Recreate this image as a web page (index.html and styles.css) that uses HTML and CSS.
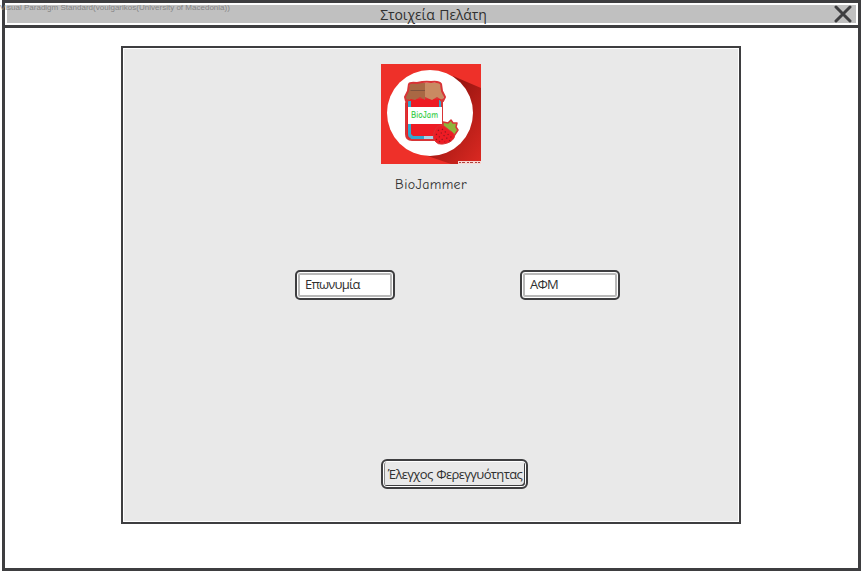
FILE: index.html
```html
<!DOCTYPE html>
<html lang="el">
<head>
<meta charset="utf-8">
<title>Στοιχεία Πελάτη</title>
<link rel="stylesheet" href="styles.css">
</head>
<body>
<div class="watermark">Visual Paradigm Standard(voulgarikos(University of Macedonia))</div>
<main class="window">
  <header class="titlebar">
    <h1 class="title"><span>Στοιχεία Πελάτη</span></h1>
    <svg class="close" viewBox="0 0 18 18"><path d="M2 2 16 16M16 2 2 16"/></svg>
  </header>
  <section class="panel">
    <svg class="logo" viewBox="0 0 100 100">
      <defs>
        <linearGradient id="shade" x1="0" y1="0" x2="1" y2="1">
          <stop offset=".35" stop-color="#981510"/>
          <stop offset="1" stop-color="#dc2922"/>
        </linearGradient>
      </defs>
      <path fill="#ee3029" d="M0 0h100v100H0z"/>
      <path fill="url(#shade)" d="M72 12 100 24V100H70L38 89z"/>
      <circle cx="49" cy="49" r="43" fill="#fff"/>
      <path fill="#ed1c24" stroke="#d83436" stroke-width="2" d="M29 34h32v37q0 5-5 5H31q-6 0-6-6V39z"/>
      <path fill="#32a8cf" d="M27 37h3v33l4 4h-4q-3 0-3-4zM58 36h2v10h-2zM28 72h27v3H30z"/>
      <path fill="#a9d4e7" d="M43 72h9v3h-9z"/>
      <path fill="#a96844" d="M29 19h15v17l-5-3-5 3-4-1-4 2-2-3 3-7z"/>
      <path fill="#c98a62" d="M44 19h15l2 7 2 7-2 3-5-3-5 3-7-3z"/>
      <path fill="#80523d" d="M30 26h14v1H29z"/>
      <path fill="none" stroke="#d83436" stroke-width="2" stroke-linejoin="round" d="M28 20q1-2 8-1 8-2 14-1 8-1 10 2l1 7 3 6-2 4-3-1M28 20l-1 7-3 6 1 4 3-1"/>
      <path fill="#fff" d="M27 43h34v17H27z"/>
      <text class="jar-label" x="30" y="54" textLength="27" lengthAdjust="spacingAndGlyphs">BioJam</text>
      <path fill="#8eb43a" stroke="#d83436" stroke-width="1.5" stroke-linejoin="round" d="m62 58 5 1 3-3 2 3 4 0-1 4 2 3-2 3-2 3-5-4-6-5z"/>
      <path fill="#ed1c24" stroke="#d83436" d="M54 66q3-6 9-4l5 4q7 4 5 8-3 5-11 6-5 1-8-3-3-4 0-11z"/>
      <path fill="none" stroke="#8b1821" stroke-width="1.2" stroke-dasharray="1.2 2.6" d="M57 66 69 77M55 70l9 8M61 65l10 9M55 75l4 3"/>
      <path fill="#f7d8d5" d="M77 97h23v3H77z"/>
      <path fill="none" stroke="#ad423d" stroke-dasharray="2 1 3 2" d="M78 98.5h21"/>
    </svg>
    <p class="brand"><span>BioJammer</span></p>
    <div class="fields">
      <div class="field"><span class="name">Επωνυμία</span></div>
      <div class="field"><span class="tax">ΑΦΜ</span></div>
    </div>
    <button class="check" type="button"><span>Έλεγχος Φερεγγυότητας</span></button>
  </section>
</main>
</body>
</html>
```

FILE: styles.css
```css
* {
  box-sizing: border-box;
}

body {
  margin: 0;
  height: 575px;
  overflow: hidden;
  background: #fff;
  color: #303030;
  font-family: "Comic Sans MS", "Comic Neue", "Open Sans", sans-serif;
  font-size: 13px;
}

.watermark {
  position: absolute;
  z-index: 1;
  left: 0;
  top: 2px;
  color: #858585;
  font: 8px/11px "Liberation Sans", sans-serif;
  letter-spacing: 0.01px;
  white-space: nowrap;
}

.window {
  width: 859px;
  height: 571px;
  margin-left: 2px;
  border: 3px solid #3e3e40;
}

.titlebar {
  display: flex;
  height: 25px;
  padding: 2px 6px 0 24px;
  border-bottom: 3px solid #3e3e40;
  background: #c0c0c0;
  box-shadow: inset 0 0 0 2px #fff;
}

.title {
  flex: 1;
  margin: 0;
  padding-left: 4px;
  font-size: 14px;
  font-weight: 400;
  line-height: 21px;
  letter-spacing: -0.1px;
  text-align: center;
}

.close {
  width: 18px;
  height: 18px;
  fill: none;
  stroke: #3e3e40;
  stroke-width: 3;
  stroke-linecap: round;
}

.panel {
  display: flex;
  flex-direction: column;
  align-items: center;
  width: 620px;
  height: 478px;
  margin: 18px 0 0 116px;
  padding-top: 16px;
  border: 2px solid #3e3e40;
  background: #e9e9e9;
  box-shadow: inset 0 0 0 1px #fff;
}

.logo {
  width: 100px;
  height: 100px;
}

.jar-label {
  fill: #45cf51;
  font-size: 9px;
  font-weight: 700;
}

.brand {
  height: 20px;
  margin: 11px 0 0;
  line-height: 20px;
}

.brand span {
  font-size: 14px;
  letter-spacing: 0.35px;
}

.fields {
  display: flex;
  gap: 125px;
  margin: 75px 0 0 53px;
}

.field {
  width: 100px;
  height: 30px;
  padding-left: 8px;
  border: 2px solid #3e3e40;
  border-radius: 5px;
  background: #fff;
  box-shadow: inset 0 0 0 1px #fff, inset 0 0 0 3px #b9b9b9;
  line-height: 25px;
}

.name {
  letter-spacing: -0.8px;
}

.tax {
  letter-spacing: -0.8px;
}

.check {
  width: 147px;
  height: 30px;
  margin: 159px 0 0 47px;
  padding: 0 0 0 1px;
  border: 2px solid #3e3e40;
  border-radius: 6px;
  background: #e9e9e9;
  box-shadow: inset 0 0 0 1px #fff, inset -2px -2px 0 #3e3e40, inset 2px 0 0 #8b8b8b;
  color: #303030;
  font: inherit;
  line-height: 27px;
  white-space: nowrap;
}

.check span {
  letter-spacing: -0.64px;
}
```
